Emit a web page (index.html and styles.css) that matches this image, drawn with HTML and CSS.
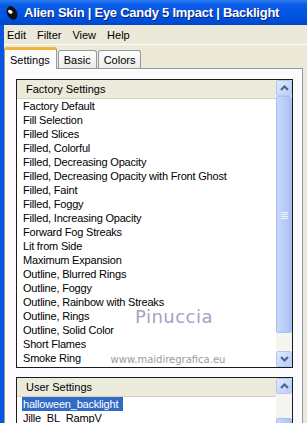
FILE: index.html
```html
<!DOCTYPE html>
<html lang="en">
<head>
    <meta charset="UTF-8">
    <title>Alien Skin | Eye Candy 5 Impact | Backlight</title>
    <link rel="stylesheet" href="styles.css">
</head>
<body>
    <div class="titlebar">
        <svg class="app-icon" width="12" height="16" viewBox="0 0 12 16">
            <ellipse cx="6" cy="8" rx="5" ry="7.2" transform="rotate(-25 6 8)" fill="#111"/>
            <ellipse cx="4.3" cy="6.8" rx="2.4" ry="1.7" transform="rotate(30 4.3 6.8)" fill="#fff"/>
        </svg>
        <span class="title">Alien Skin | Eye Candy 5 Impact | Backlight</span>
    </div>

    <div class="frame">
        <div class="menubar">
            <span>Edit</span>
            <span>Filter</span>
            <span>View</span>
            <span>Help</span>
        </div>

        <div class="tabs">
            <div class="tab active">Settings</div>
            <div class="tab">Basic</div>
            <div class="tab">Colors</div>
        </div>

        <div class="panel">
            <div class="listbox factory">
                <div class="list-body">
                    <div class="list-header">Factory Settings</div>
                    <ul class="items">
                        <li>Factory Default</li>
                        <li>Fill Selection</li>
                        <li>Filled Slices</li>
                        <li>Filled, Colorful</li>
                        <li>Filled, Decreasing Opacity</li>
                        <li>Filled, Decreasing Opacity with Front Ghost</li>
                        <li>Filled, Faint</li>
                        <li>Filled, Foggy</li>
                        <li>Filled, Increasing Opacity</li>
                        <li>Forward Fog Streaks</li>
                        <li>Lit from Side</li>
                        <li>Maximum Expansion</li>
                        <li>Outline, Blurred Rings</li>
                        <li>Outline, Foggy</li>
                        <li>Outline, Rainbow with Streaks</li>
                        <li>Outline, Rings</li>
                        <li>Outline, Solid Color</li>
                        <li>Short Flames</li>
                        <li>Smoke Ring</li>
                    </ul>
                </div>
                <div class="scrollbar">
                    <div class="sb-btn">
                        <svg width="9" height="6" viewBox="0 0 9 6"><path d="M1 5 L4.5 1.5 L8 5" fill="none" stroke="#4d6185" stroke-width="2"/></svg>
                    </div>
                    <div class="sb-thumb">
                        <svg width="7" height="8" viewBox="0 0 7 8"><path d="M0 1.5h7M0 3.5h7M0 5.5h7M0 7.5h7" stroke="#eef3ff" stroke-width="1"/></svg>
                    </div>
                    <div class="sb-track"></div>
                    <div class="sb-btn">
                        <svg width="9" height="6" viewBox="0 0 9 6"><path d="M1 1 L4.5 4.5 L8 1" fill="none" stroke="#4d6185" stroke-width="2"/></svg>
                    </div>
                </div>
            </div>

            <div class="listbox user">
                <div class="list-body">
                    <div class="list-header">User Settings</div>
                    <ul class="items">
                        <li><span class="selected">halloween_backlight</span></li>
                        <li>Jille_BL_RampV</li>
                    </ul>
                </div>
                <div class="scrollbar">
                    <div class="sb-btn">
                        <svg width="9" height="6" viewBox="0 0 9 6"><path d="M1 5 L4.5 1.5 L8 5" fill="none" stroke="#4d6185" stroke-width="2"/></svg>
                    </div>
                    <div class="sb-track"></div>
                    <div class="sb-thumb"></div>
                </div>
            </div>
        </div>
    </div>

    <div class="watermark">
        <div class="wm-name">Pinuccia</div>
        <div class="wm-site">www.maidiregrafica.eu</div>
    </div>
</body>
</html>
```

FILE: styles.css
```css
body {
    margin: 0;
    width: 307px;
    height: 423px;
    overflow: hidden;
    background: #ece9d8;
    font-family: "Liberation Sans", Arial, sans-serif;
    font-size: 11px;
    color: #000;
    position: relative;
}
.titlebar {
    height: 25px;
    display: flex;
    align-items: center;
    overflow: hidden;
    background: linear-gradient(#2a7cf3 0%, #0a5ae6 20%, #0055e5 60%, #0048cc 100%);
    color: #fff;
}
.app-icon {
    flex-shrink: 0;
    margin-left: 6px;
    margin-right: 6px;
}
.title {
    font-family: "Liberation Sans", Arial, sans-serif;
    font-weight: bold;
    font-size: 13px;
    letter-spacing: -0.25px;
    text-shadow: 1px 1px 0 #0a1e70;
    white-space: nowrap;
}
.frame {
    border-left: 4px solid #0a55e0;
    height: 398px;
    box-sizing: border-box;
    display: flex;
    flex-direction: column;
}
.menubar {
    height: 19px;
    flex-shrink: 0;
    display: flex;
    align-items: center;
    padding-left: 3px;
    border-bottom: 1px solid #fff;
    font-size: 11px;
}
.menubar span {
    margin-right: 11px;
}
.tabs {
    display: flex;
    flex-shrink: 0;
    align-items: flex-end;
    height: 23px;
}
.tab {
    height: 17px;
    line-height: 18px;
    padding: 0 5px;
    border: 1px solid #919b9c;
    border-bottom: none;
    border-radius: 3px 3px 0 0;
    background: linear-gradient(#fefefe, #ecebe6);
    margin-right: 1px;
    font-size: 11px;
}
.tab.active {
    height: 19px;
    line-height: 20px;
    background: #fcfcfe;
    border-top: 3px solid #f7b038;
    position: relative;
    top: 1px;
    padding: 0 6px 0 5px;
}
.panel {
    flex: 1;
    background: #fcfcfe;
    border: 1px solid #919b9c;
    border-bottom: none;
    margin-right: 4px;
    padding: 10px 9px 0 11px;
    overflow: hidden;
}
.listbox {
    display: flex;
    border: 1px solid #1c1c1c;
    background: #fff;
}
.factory {
    height: 287px;
}
.user {
    margin-top: 9px;
    height: 60px;
}
.list-body {
    flex: 1;
    overflow: hidden;
}
.list-header {
    height: 18px;
    line-height: 19px;
    padding-left: 9px;
    background: #ebeadb;
    border-bottom: 1px solid #d6d2c2;
    font-size: 11px;
}
.items {
    list-style: none;
    margin: 0;
    padding: 0 0 0 6px;
}
.items li {
    height: 14px;
    line-height: 14px;
    white-space: nowrap;
    font-size: 11px;
    letter-spacing: -0.2px;
}
.selected {
    background: #316ac5;
    color: #fff;
    padding: 0 5px 0 1px;
    margin-left: -1px;
    display: inline-block;
    height: 14px;
}
.scrollbar {
    width: 16px;
    display: flex;
    flex-direction: column;
    background: #f4f4f0;
}
.sb-btn {
    height: 16px;
    flex-shrink: 0;
    display: flex;
    align-items: center;
    justify-content: center;
    background: linear-gradient(135deg, #dfe8fd, #b9cdf8);
    border: 1px solid #b3c6f4;
    border-radius: 2px;
    box-sizing: border-box;
}
.sb-thumb {
    height: 237px;
    flex-shrink: 0;
    display: flex;
    align-items: center;
    justify-content: center;
    background: linear-gradient(90deg, #c9d8fc, #b6cbf8 60%, #aac0f4);
    border: 1px solid #a8bdf0;
    border-radius: 2px;
    box-sizing: border-box;
}
.sb-track {
    flex: 1;
    background: #f5f5f0;
}
.user .sb-track {
    flex: 0 0 24px;
}
.user .sb-thumb {
    flex: 1;
    height: auto;
}
.watermark {
    position: absolute;
    left: 105px;
    top: 306px;
    width: 126px;
    text-align: center;
    pointer-events: none;
}
.wm-name {
    font-family: "DejaVu Sans", sans-serif;
    font-size: 18px;
    letter-spacing: 0.5px;
    color: #a4a3c3;
    padding-left: 12px;
}
.wm-site {
    font-family: "DejaVu Sans", sans-serif;
    font-size: 10px;
    color: #9c9c9c;
    margin-top: 27px;
}
```
